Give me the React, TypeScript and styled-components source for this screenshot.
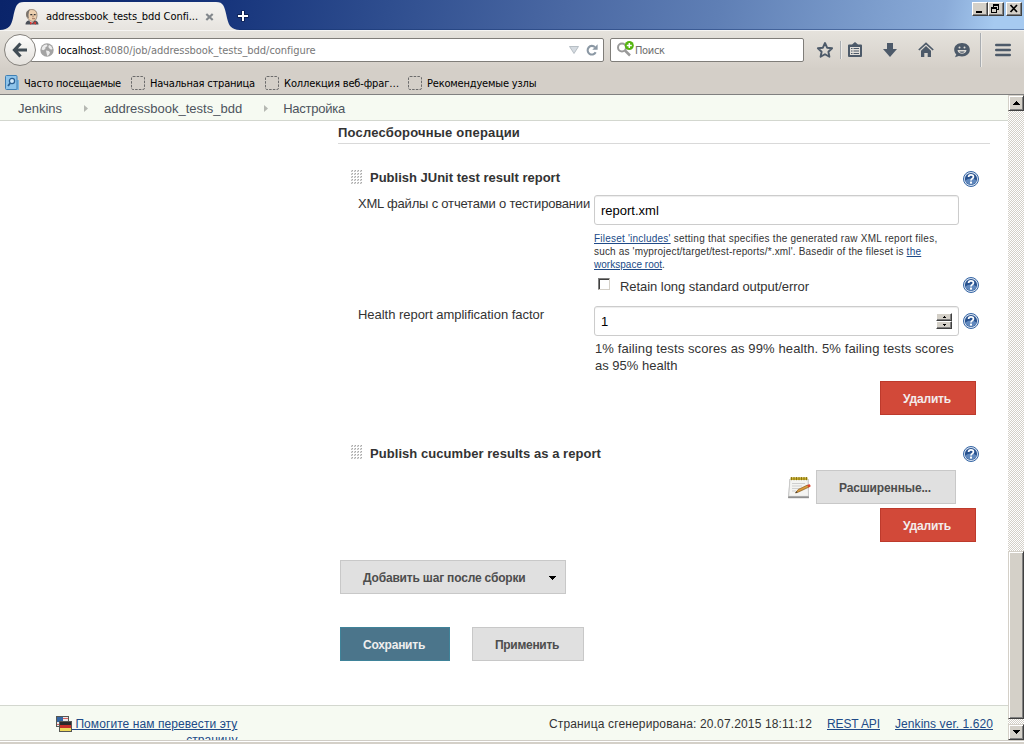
import React from "react";
import styled, { createGlobalStyle, css } from "styled-components";

const GlobalStyle = createGlobalStyle`
  * { box-sizing: border-box; }
  html, body { margin: 0; padding: 0; }
  body { width: 1024px; height: 744px; overflow: hidden; background: #d4d0c8; }
`;

const Window = styled.div`
  display: flex;
  flex-direction: column;
  width: 1024px;
  height: 744px;
  overflow: hidden;
  font: 13px/17px "Liberation Sans", Arial, sans-serif;
  color: #333;
`;

const Text = styled.span<{ $ls?: number }>`
  white-space: pre;
  letter-spacing: ${(p) => p.$ls ?? 0}px;
`;

/* ---------- browser chrome ---------- */

const chromeFont = css`
  font: 11px/14px "DejaVu Sans Condensed", "DejaVu Sans", Tahoma, sans-serif;
  color: #000;
`;

const TitleBar = styled.header`
  display: flex;
  justify-content: space-between;
  align-items: flex-start;
  height: 30px;
  flex: none;
  background: linear-gradient(100deg, #0a246a 0%, #17357c 22%, #2f4e8f 38%, #4a68a3 55%, #5f7fb5 70%, #7a9bcb 84%, #8aabd8 92%, #a6caf0 97%);
  box-shadow: inset 0 -1px 0 rgba(20, 50, 110, 0.45);
`;

const TabStrip = styled.div`
  display: flex;
  height: 30px;
`;

const Tab = styled.div`
  ${chromeFont}
  position: relative;
  width: 232px;
  height: 30px;
  display: flex;
  align-items: center;
  padding: 3px 0 0 24px;
`;

const TabShape = styled.svg`
  position: absolute;
  left: 0;
  top: 0;
`;

const TabContent = styled.div`
  position: relative;
  display: flex;
  align-items: center;
  svg + span { margin-left: 6px; }
  span + svg { margin-left: 7px; }
`;

const NewTab = styled.svg`
  margin: 10px 0 0 5px;
`;

const WindowButtons = styled.div`
  display: flex;
  margin: 2px 2px 0 0;
`;

const bevel = css`
  background: #d4d0c8;
  border: 1px solid;
  border-color: #fff #404040 #404040 #fff;
  box-shadow: inset -1px -1px 0 #808080;
`;

const WindowButton = styled.div<{ $gap?: number }>`
  ${bevel}
  width: 16px;
  height: 14px;
  margin-left: ${(p) => p.$gap ?? 0}px;
  svg { display: block; }
`;

const NavBar = styled.div`
  display: flex;
  align-items: center;
  flex: none;
  height: 38px;
  padding-left: 4px;
  border-top: 1px solid #f6f5f3;
  background: linear-gradient(#e5e2dc, #d5d0c9);
`;

const BackButton = styled.div`
  position: relative;
  z-index: 1;
  display: flex;
  align-items: center;
  justify-content: center;
  width: 32px;
  height: 32px;
  flex: none;
  border: 1px solid #85827d;
  border-radius: 50%;
  background: linear-gradient(#fdfdfc, #e4e1dc);
`;

const fieldBox = css`
  ${chromeFont}
  display: flex;
  align-items: center;
  height: 24px;
  background: #fff;
  border: 1px solid #7f7d79;
  border-radius: 2px;
`;

const UrlField = styled.div`
  ${fieldBox}
  width: 574px;
  margin-left: -6px;
  padding: 0 5px 0 9px;
`;

const UrlText = styled.div`
  display: flex;
  flex: 1;
  margin-left: 4px;
  padding-top: 3px;
`;

const UrlPath = styled(Text)`
  color: #777;
`;

const UrlActions = styled.div`
  display: flex;
  align-items: center;
  gap: 7px;
`;

const SearchField = styled.div`
  ${fieldBox}
  width: 194px;
  margin-left: 6px;
  padding-left: 5px;
  color: #6d6d6d;
  gap: 1px;
  span { padding-top: 3px; }
`;

const ToolIcons = styled.div`
  display: flex;
  align-items: center;
  flex: 1;
  padding-left: 12px;
  svg { display: block; flex: none; }
`;

const Slot = styled.div<{ $w: number }>`
  width: ${(p) => p.$w}px;
  flex: none;
`;

const ToolDivider = styled.div<{ $h: number; $gap: number }>`
  width: 2px;
  height: ${(p) => p.$h}px;
  margin-right: ${(p) => p.$gap}px;
  border-left: 1px solid #a9adb1;
  border-right: 1px solid #eceae6;
`;

const Bookmarks = styled.nav`
  ${chromeFont}
  display: flex;
  align-items: center;
  flex: none;
  height: 27px;
  padding: 3px 0 0 5px;
  background: #d4cfc8;
  border-bottom: 1px solid #808080;
`;

const Bookmark = styled.div<{ $w: number }>`
  display: flex;
  align-items: center;
  width: ${(p) => p.$w}px;
  flex: none;
  gap: 5px;
  span { padding-top: 3px; }
`;

/* ---------- page ---------- */

const Viewport = styled.div`
  display: flex;
  flex: none;
  height: 645px;
  background: #fff;
`;

const Page = styled.div`
  display: flex;
  flex-direction: column;
  width: 1008px;
  height: 645px;
`;

const StatusEdge = styled.div`
  flex: none;
  height: 4px;
  background: linear-gradient(#d0cdc6 0 1px, #fff 1px 2px, #d4d0c8 2px);
`;

const Breadcrumbs = styled.div`
  display: flex;
  align-items: center;
  flex: none;
  height: 26px;
  padding: 2px 0 0 18px;
  background: #f6faf2;
  border-bottom: 1px solid #d3d7cf;
  color: #4d545d;
`;

const CrumbArrow = styled.svg<{ $l: number; $r: number }>`
  margin: 0 ${(p) => p.$r}px 0 ${(p) => p.$l}px;
`;

const Form = styled.main`
  display: flex;
  flex-direction: column;
  width: 652px;
  margin-left: 338px;
`;

const SectionHeader = styled.h2`
  height: 23px;
  margin: 0 0 19px;
  padding-top: 3px;
  border-bottom: 1px solid #d9d9d9;
  font-size: 13px;
  line-height: 17px;
  font-weight: bold;
`;

const BlockTitle = styled.div<{ $mt?: number; $drop?: number }>`
  display: flex;
  align-items: center;
  height: 31px;
  margin-top: ${(p) => p.$mt ?? 0}px;
  padding: 0 11px 0 13px;
  font-weight: bold;
  svg:first-child { margin-bottom: 3px; }
  span { flex: 1; margin-left: 8px; padding-bottom: ${(p) => 2 - (p.$drop ?? 0)}px; }
`;

const Row = styled.div<{ $mt?: number }>`
  display: grid;
  grid-template-columns: 236px 365px 16px;
  column-gap: 0;
  padding-left: 20px;
  margin-top: ${(p) => p.$mt ?? 0}px;
  > svg { align-self: center; margin-left: 4px; }
`;

const Label = styled.div`
  padding-top: 0;
`;

const Input = styled.div`
  display: flex;
  align-items: center;
  justify-content: space-between;
  height: 30px;
  padding: 0 6px;
  border: 1px solid #ccc;
  border-radius: 3px;
  box-shadow: inset 0 1px 1px rgba(0, 0, 0, 0.075);
  color: #000;
`;

const HelpText = styled.div`
  grid-column: 2;
  display: flex;
  flex-direction: column;
  font-size: 10px;
  line-height: 13px;
`;

const Link = styled.a<{ $ls?: number }>`
  color: #204a87;
  text-decoration: underline;
  white-space: pre;
  letter-spacing: ${(p) => p.$ls ?? 0}px;
`;

const CheckRow = styled.div`
  display: flex;
  align-items: center;
  grid-column: 2;
  height: 26px;
  padding: 0 0 0 4px;
  span { margin-left: 10px; padding-top: 3px; }
`;

const Checkbox = styled.div`
  width: 12px;
  height: 12px;
  margin-bottom: 3px;
  background: #fff;
  border: 1px solid;
  border-color: #808080 #d4d0c8 #d4d0c8 #808080;
  box-shadow: inset 1px 1px 0 #404040;
`;

const Spinner = styled.div`
  display: flex;
  flex-direction: column;
  width: 16px;
  height: 16px;
`;

const SpinButton = styled.div`
  ${bevel}
  display: flex;
  align-items: center;
  justify-content: center;
  height: 8px;
`;

const Description = styled.div`
  grid-column: 2;
  display: flex;
  flex-direction: column;
  padding-left: 1px;
`;

const tones = {
  danger: css`background: #d24939; border-color: #bd3a2c; color: #f3ecec;`,
  primary: css`background: #4b758b; border-color: #3f8399; color: #eee;`,
  plain: css`background: #e0e0e0; border-color: #c8c8c8; color: #4d4d4d;`,
};

const Button = styled.button<{ $tone: keyof typeof tones; $w: number }>`
  display: flex;
  align-items: center;
  justify-content: space-between;
  width: ${(p) => p.$w}px;
  height: 34px;
  margin: 0;
  padding: 2px 9px 0 22px;
  border: 1px solid;
  font: bold 12px/16px "Liberation Sans", Arial, sans-serif;
  ${(p) => tones[p.$tone]}
`;

const Actions = styled.div<{ $mt: number; $right?: number }>`
  display: flex;
  align-items: center;
  justify-content: ${(p) => (p.$right === undefined ? "flex-start" : "flex-end")};
  margin-top: ${(p) => p.$mt}px;
  padding: 0 ${(p) => p.$right ?? 0}px 0 2px;
`;

const NotepadIcon = styled.svg`
  margin: 2px 5px 0 0;
`;

const Footer = styled.footer`
  display: flex;
  justify-content: space-between;
  flex: none;
  height: 35px;
  margin-top: auto;
  padding: 10px 15px 0 56px;
  overflow: hidden;
  background: #f6faf2;
  border-top: 1px solid #d3d7cf;
  font-size: 12px;
  line-height: 16px;
`;

const Translate = styled.div`
  display: flex;
  align-items: flex-start;
  svg { flex: none; }
`;

const TranslateLines = styled.div`
  display: flex;
  flex-direction: column;
  align-items: flex-end;
`;

const FooterRight = styled.div`
  display: flex;
  a { margin-left: 15px; height: 17px; }
`;

/* ---------- scrollbar ---------- */

const ScrollTrack = styled.div`
  display: flex;
  flex-direction: column;
  width: 16px;
  height: 645px;
  background: conic-gradient(#fff 25%, #d4d0c8 0 50%, #fff 0 75%, #d4d0c8 0) 0 0 / 2px 2px;
`;

const ScrollPart = styled.div<{ $h: number }>`
  display: flex;
  align-items: center;
  justify-content: center;
  flex: none;
  height: ${(p) => p.$h}px;
  background: #d4d0c8;
  border: 1px solid;
  border-color: #d4d0c8 #404040 #404040 #d4d0c8;
  box-shadow: inset 1px 1px 0 #fff, inset -1px -1px 0 #808080;
`;

const ScrollGap = styled.div<{ $h: number }>`
  height: ${(p) => p.$h}px;
  flex: none;
`;

/* ---------- drawings ---------- */

const Butler = () => (
  <svg width="16" height="16" viewBox="0 0 16 16">
    <path d="M1.500 15.500c0-2 1-3.500 3-4l6-.3c2.500.500 4 1.800 4 4.300z" fill="#4a4f58" />
    <path d="M5 11.500l2.500 3 3-3-1-1.500z" fill="#fff" />
    <path d="M2.500 6C2 2.500 4.500 .5 7.800.5s5.400 2 5.200 5.900c-.2 3.500-1.900 6-4.400 6S3 9.700 2.500 6z" fill="#eccfae" stroke="#6b5a4c" strokeWidth=".6" />
    <path d="M2.800 8C1.300 4 3.300 .8 6.300 .5 4.600 2.200 5 4 4.500 5.500c0 1.200 0 2.500.500 4z" fill="#77726d" />
    <path d="M6.300 5.600h2M9.800 5.600h1.800" stroke="#333" strokeWidth="1.100" />
    <path d="M9 6.500v1.800M8 9.700h3" stroke="#8c5a48" strokeWidth=".8" />
    <path d="M6 12.500l2.800 1.500L6 15.700zM12 12.500L8.800 14l3.200 1.700z" fill="#d33833" />
  </svg>
);

const Globe = () => (
  <svg width="14" height="14" viewBox="0 0 14 14">
    <circle cx="7" cy="7" r="6.700" fill="#a3a3a3" />
    <path d="M2 4.500C3 2.500 5 1.500 6.800 1.600L7.500 3 5.500 4.200 5.300 6l-2 1.200L1.600 6.500zM9 2l2.200 1.300 1.300 2.500-1.300 1-1.500-1L8.300 4zM6 7.500l2.800.5 1.200 1.500-1 2.200-1.700 1.200L6.500 10z" fill="#ececec" />
  </svg>
);

const DashedPage = () => (
  <svg width="14" height="14" viewBox="0 0 14 14">
    <rect x=".5" y=".5" width="13" height="13" rx="1.500" fill="none" stroke="#6b6b6b" strokeDasharray="2.500 1.200" />
  </svg>
);

const HelpIcon = () => (
  <svg width="16" height="16" viewBox="0 0 16 16">
    <circle cx="8" cy="8" r="7.500" fill="#dbe5f2" stroke="#3465a4" />
    <circle cx="8" cy="8" r="6.100" fill="#28528f" />
    <path d="M2.300 9.500A6 6 0 0 0 13.700 9.500 9 9 0 0 0 2.300 9.500z" fill="#6088bd" />
    <path d="M5.600 6C5.600 3.100 10.400 3.100 10.400 5.900 10.400 7.600 8 7.700 8 9.500" fill="none" stroke="#fff" strokeWidth="1.800" />
    <rect x="7" y="10.600" width="2" height="2" fill="#fff" />
  </svg>
);

const Grip = () => (
  <svg width="11" height="14" viewBox="0 0 11 14" shapeRendering="crispEdges">
    {[0, 3, 6, 9, 12].map((y) =>
      [0, 3, 6, 9].map((x) => (
        <g key={`${x}-${y}`}>
          <rect x={x} y={y} width="2" height="2" fill="#dedede" />
          <rect x={x + 1} y={y} width="1" height="1" fill="#a8a8a8" />
          <rect x={x} y={y + 1} width="1" height="1" fill="#bcbcbc" />
        </g>
      ))
    )}
  </svg>
);

const Notepad = () => (
  <NotepadIcon width="24" height="24" viewBox="0 0 24 24">
    <path d="M2.500 3h19l.5 19H1z" fill="#b9b9b9" />
    <path d="M3 3h18l.5 17.300H1.800z" fill="#f4f4f2" stroke="#c2c2c2" strokeWidth=".6" />
    <path d="M1.200 20.500h20.700v1.700H1.200z" fill="#8f8f8f" />
    <path d="M3.500 1.300h17v2.700h-17z" fill="#c6ad2e" />
    <path d="M4.500 1v3.200M7 1v3.200M9.500 1v3.200M12 1v3.200M14.500 1v3.200M17 1v3.200M19.500 1v3.200" stroke="#85710f" strokeWidth=".9" />
    <path d="M5 7.500h13M5 10h10M5 12.500h8M5 15h4" stroke="#cfcfcf" />
    <path d="M8.500 17l2.700-3.500L20.500 9l1.500 2-10 4.800z" fill="#d99a3c" stroke="#8a5a17" strokeWidth=".7" />
    <path d="M8.300 17.100l1.300-1.800 1 1.300z" fill="#333" />
    <path d="M20 9.200l2-.9c1.300 0 2 1.600 1.300 2.400l-1.500.8z" fill="#d9432f" />
  </NotepadIcon>
);

const Flags = () => (
  <svg width="16" height="16" viewBox="0 0 16 16" shapeRendering="crispEdges">
    <rect width="13" height="11" fill="#555753" />
    <rect x="1" y="1" width="11" height="9" fill="#e8e8ea" />
    <path d="M7 2.500h5M7 5.500h5M1 8.500h11" stroke="#d8605f" />
    <rect x="1" y="1" width="6" height="5" fill="#3465a4" />
    <rect x="3" y="5" width="13" height="11" fill="#555753" />
    <rect x="4" y="6" width="11" height="3" fill="#2a2a2a" />
    <rect x="4" y="9" width="11" height="3" fill="#c4302a" />
    <rect x="4" y="12" width="11" height="3" fill="#efd95a" />
  </svg>
);

const Triangle = ({ up, w = 7 }: { up?: boolean; w?: number }) => {
  const h = (w + 1) / 2;
  return (
    <svg width={w} height={h} viewBox={`0 0 ${w} ${h}`} shapeRendering="crispEdges">
      {Array.from({ length: h }, (_, i) => (
        <rect key={i} x={i} y={up ? h - 1 - i : i} width={w - 2 * i} height="1" fill="#000" />
      ))}
    </svg>
  );
};

const ink = "#4d5a69";

const Toolbar = () => (
  <ToolIcons>
    <Slot $w={24}>
      <svg width="18" height="18" viewBox="0 0 18 18">
        <path d="M9 2l2.100 4.700 5 .5-3.700 3.500 1 5.100L9 13.200l-4.400 2.600 1-5.100L1.900 7.200l5-.5z" fill="none" stroke={ink} strokeWidth="1.900" strokeLinejoin="round" />
      </svg>
    </Slot>
    <ToolDivider $h={18} $gap={5} />
    <Slot $w={35}>
      <svg width="16" height="18" viewBox="0 0 16 18">
        <path d="M2 3.500h3L8 1l3 2.500h3a1 1 0 0 1 1 1v10.500a1 1 0 0 1-1 1H2a1 1 0 0 1-1-1V4.500a1 1 0 0 1 1-1z" fill={ink} />
        <path d="M3 6h10v8H3z" fill="#e2dfda" />
        <path d="M4 7.500h1.500M6.500 7.500H12M4 10h1.500M6.500 10H12M4 12.500h1.500M6.500 12.500H12" stroke={ink} strokeWidth="1.200" />
      </svg>
    </Slot>
    <Slot $w={36}>
      <svg width="16" height="18" viewBox="0 0 16 18">
        <path d="M5 2h6v6h4l-7 8L1 8h4z" fill={ink} />
      </svg>
    </Slot>
    <Slot $w={35}>
      <svg width="16" height="18" viewBox="0 0 16 18">
        <path d="M.8 9L8 2.300 15.200 9" fill="none" stroke={ink} strokeWidth="1.700" />
        <path d="M8 5l5 4.700V16H9.700v-4H6.300v4H3V9.700z" fill={ink} />
      </svg>
    </Slot>
    <Slot $w={27}>
      <svg width="18" height="18" viewBox="0 0 18 18">
        <path d="M9 2c4.500 0 7.800 2.800 7.800 6.700S13.500 15.400 9 15.400c-1.200 0-2.200-.2-3.200-.5L2 16.300l1.300-3C2 12.200 1.200 10.600 1.200 8.700 1.200 4.800 4.500 2 9 2z" fill={ink} />
        <circle cx="6.500" cy="6.500" r="1" fill="#dedbd5" />
        <circle cx="11.500" cy="6.500" r="1" fill="#dedbd5" />
        <path d="M4.500 9h9c-.5 5-8.500 5-9 0z" fill="#dedbd5" />
        <path d="M6.300 10.400h5.400c-.8 1.800-4.600 1.800-5.400 0z" fill={ink} />
      </svg>
    </Slot>
    <ToolDivider $h={34} $gap={13} />
    <svg width="16" height="14" viewBox="0 0 16 14">
      <path d="M1.200 2h13.600M1.200 7h13.600M1.200 12h13.600" stroke={ink} strokeWidth="2.400" strokeLinecap="round" />
    </svg>
  </ToolIcons>
);

const CrumbSep = ({ l, r }: { l: number; r: number }) => (
  <CrumbArrow $l={l} $r={r} width="4" height="7" viewBox="0 0 4 7">
    <path d="M0 0l4 3.500L0 7z" fill="#b5b8b2" />
  </CrumbArrow>
);

export default function App() {
  return (
    <Window>
      <GlobalStyle />
      <TitleBar>
        <TabStrip>
          <Tab>
            <TabShape width="240" height="30" viewBox="0 0 240 30">
              <defs>
                <linearGradient id="tab" x1="0" y1="0" x2="0" y2="1">
                  <stop offset="0" stopColor="#f4f3f1" />
                  <stop offset="1" stopColor="#e7e4df" />
                </linearGradient>
              </defs>
              <path d="M0 30C9 29.500 11 26 13 18 15.500 6 16.500 2 24 2H216C223.500 2 224.500 6 227 18 229 26 231 29.500 240 30z" fill="url(#tab)" />
            </TabShape>
            <TabContent>
              <Butler />
              <Text $ls={-0.065}>addressbook_tests_bdd Confi...</Text>
              <svg width="9" height="8" viewBox="0 0 9 8">
                <path d="M1.300 1l6.400 6M7.700 1L1.300 7" stroke="#82878c" strokeWidth="2.200" />
              </svg>
            </TabContent>
          </Tab>
          <NewTab width="12" height="12" viewBox="0 0 12 12">
            <path d="M6 .5v11M.5 6h11" stroke="#0b1d4d" strokeWidth="4" />
            <path d="M6 1v10M1 6h10" stroke="#fff" strokeWidth="2" />
          </NewTab>
        </TabStrip>
        <WindowButtons>
          <WindowButton>
            <svg width="14" height="12" viewBox="0 0 14 12"><path d="M3 8h6v2H3z" fill="#000" /></svg>
          </WindowButton>
          <WindowButton>
            <svg width="14" height="12" viewBox="0 0 14 12" shapeRendering="crispEdges">
              <path d="M4 1h6v2H4zM4 3h1v1H4zM9 3h1v4H9zM8 6h1v1H8zM2 4h6v2H2zM2 6h1v4H2zM7 6h1v4H7zM3 9h4v1H3z" fill="#000" />
            </svg>
          </WindowButton>
          <WindowButton $gap={2}>
            <svg width="14" height="12" viewBox="0 0 14 12"><path d="M3.500 2l6.500 7M10 2L3.500 9" stroke="#000" strokeWidth="1.700" /></svg>
          </WindowButton>
        </WindowButtons>
      </TitleBar>

      <NavBar>
        <BackButton>
          <svg width="16" height="16" viewBox="0 0 16 16">
            <path d="M8.500 1.500L2.500 8l6 6.500M3 8h12" fill="none" stroke="#414c55" strokeWidth="3.200" />
          </svg>
        </BackButton>
        <UrlField>
          <Globe />
          <UrlText>
            <Text $ls={-0.158}>localhost</Text>
            <UrlPath $ls={-0.035}>:8080/job/addressbook_tests_bdd/configure</UrlPath>
          </UrlText>
          <UrlActions>
            <svg width="10" height="8" viewBox="0 0 10 8"><path d="M.5 .5h9L5 7.500z" fill="#d5dbe1" stroke="#a9b2ba" strokeWidth=".8" /></svg>
            <svg width="12" height="12" viewBox="0 0 12 12">
              <path d="M9.700 8.300A4.300 4.300 0 1 1 9 3.200" fill="none" stroke="#8b98a4" strokeWidth="2.100" />
              <path d="M11.600 .3v5.400H6.300z" fill="#8b98a4" />
            </svg>
          </UrlActions>
        </UrlField>
        <SearchField>
          <svg width="18" height="18" viewBox="0 0 18 18">
            <path d="M9 9.500l5 5" stroke="#999" strokeWidth="2.500" />
            <circle cx="6" cy="6.500" r="4" fill="#fff" stroke="#999" strokeWidth="2" />
            <circle cx="13.300" cy="4.500" r="4.500" fill="#55b510" />
            <path d="M13.300 2v5M10.800 4.500h5" stroke="#fff" strokeWidth="1.500" />
          </svg>
          <Text $ls={-0.35}>Поиск</Text>
        </SearchField>
        <Toolbar />
      </NavBar>

      <Bookmarks>
        <Bookmark $w={126}>
          <svg width="14" height="16" viewBox="0 0 14 16">
            <path d="M2 1h10v4h2v10H2z" fill="#7db6e0" />
            <rect x=".5" y=".5" width="11.500" height="14" rx="1" fill="#8fc4ea" stroke="#3f80b5" />
            <circle cx="7" cy="6" r="2.600" fill="#d3eafa" stroke="#2a5f92" strokeWidth="1.300" />
            <path d="M5.300 8L3 11" stroke="#2a5f92" strokeWidth="1.800" />
          </svg>
          <Text $ls={-0.197}>Часто посещаемые</Text>
        </Bookmark>
        <Bookmark $w={134}><DashedPage /><Text $ls={-0.193}>Начальная страница</Text></Bookmark>
        <Bookmark $w={143}><DashedPage /><Text $ls={-0.135}>Коллекция веб-фраг…</Text></Bookmark>
        <Bookmark $w={140}><DashedPage /><Text $ls={-0.19}>Рекомендуемые узлы</Text></Bookmark>
      </Bookmarks>

      <Viewport>
        <Page>
          <Breadcrumbs>
            <Text>Jenkins</Text>
            <CrumbSep l={22} r={16} />
            <Text>addressbook_tests_bdd</Text>
            <CrumbSep l={22} r={15} />
            <Text $ls={-0.222}>Настройка</Text>
          </Breadcrumbs>

          <Form>
            <SectionHeader><Text $ls={0.192}>Послесборочные операции</Text></SectionHeader>

            <BlockTitle><Grip /><Text>Publish JUnit test result report</Text><HelpIcon /></BlockTitle>
            <Row $mt={1}>
              <Label><Text $ls={-0.194}>XML файлы с отчетами о тестировании</Text></Label>
              <Input><Text>report.xml</Text></Input>
            </Row>
            <Row $mt={7}>
              <HelpText>
                <div><Link $ls={0.22}>Fileset 'includes'</Link><Text $ls={0.25}> setting that specifies the generated raw XML report files,</Text></div>
                <div><Text $ls={0.172}>such as 'myproject/target/test-reports/*.xml'. Basedir of the fileset is </Text><Link $ls={0.25}>the</Link></div>
                <div><Link $ls={0.02}>workspace root</Link>.</div>
              </HelpText>
            </Row>
            <Row $mt={1}>
              <CheckRow><Checkbox /><Text $ls={-0.054}>Retain long standard output/error</Text></CheckRow>
              <HelpIcon />
            </Row>
            <Row $mt={8}>
              <Label><Text $ls={-0.034}>Health report amplification factor</Text></Label>
              <Input>
                <Text>1</Text>
                <Spinner>
                  <SpinButton><Triangle up w={3} /></SpinButton>
                  <SpinButton><Triangle w={3} /></SpinButton>
                </Spinner>
              </Input>
              <HelpIcon />
            </Row>
            <Row $mt={4}>
              <Description>
                <Text $ls={0.114}>1% failing tests scores as 99% health. 5% failing tests scores</Text>
                <Text>as 95% health</Text>
              </Description>
            </Row>
            <Actions $mt={7} $right={14}>
              <Button $tone="danger" $w={96}><Text $ls={-0.181}>Удалить</Text></Button>
            </Actions>

            <BlockTitle $mt={23} $drop={2}><Grip /><Text $ls={0.055}>Publish cucumber results as a report</Text><HelpIcon /></BlockTitle>
            <Actions $mt={1} $right={34}>
              <Notepad />
              <Button $tone="plain" $w={140}><Text $ls={-0.143}>Расширенные...</Text></Button>
            </Actions>
            <Actions $mt={4} $right={14}>
              <Button $tone="danger" $w={96}><Text $ls={-0.181}>Удалить</Text></Button>
            </Actions>

            <Actions $mt={18}>
              <Button $tone="plain" $w={226}><Text $ls={-0.18}>Добавить шаг после сборки</Text><Triangle /></Button>
            </Actions>
            <Actions $mt={33}>
              <Button $tone="primary" $w={110}><Text $ls={-0.25}>Сохранить</Text></Button>
              <Slot $w={22} />
              <Button $tone="plain" $w={112}><Text $ls={-0.3}>Применить</Text></Button>
            </Actions>
          </Form>

          <Footer>
            <Translate>
              <Flags />
              <TranslateLines>
                <Link $ls={0.076}> Помогите нам перевести эту</Link>
                <Link>страницу</Link>
              </TranslateLines>
            </Translate>
            <FooterRight>
              <Text $ls={0.148}>Страница сгенерирована: 20.07.2015 18:11:12</Text>
              <Link $ls={-0.1}>REST API</Link>
              <Link $ls={0.07}>Jenkins ver. 1.620</Link>
            </FooterRight>
          </Footer>
        </Page>

        <ScrollTrack>
          <ScrollPart $h={16}><Triangle up /></ScrollPart>
          <ScrollGap $h={440} />
          <ScrollPart $h={168}><span /></ScrollPart>
          <ScrollGap $h={5} />
          <ScrollPart $h={16}><Triangle /></ScrollPart>
        </ScrollTrack>
      </Viewport>
      <StatusEdge />
    </Window>
  );
}
